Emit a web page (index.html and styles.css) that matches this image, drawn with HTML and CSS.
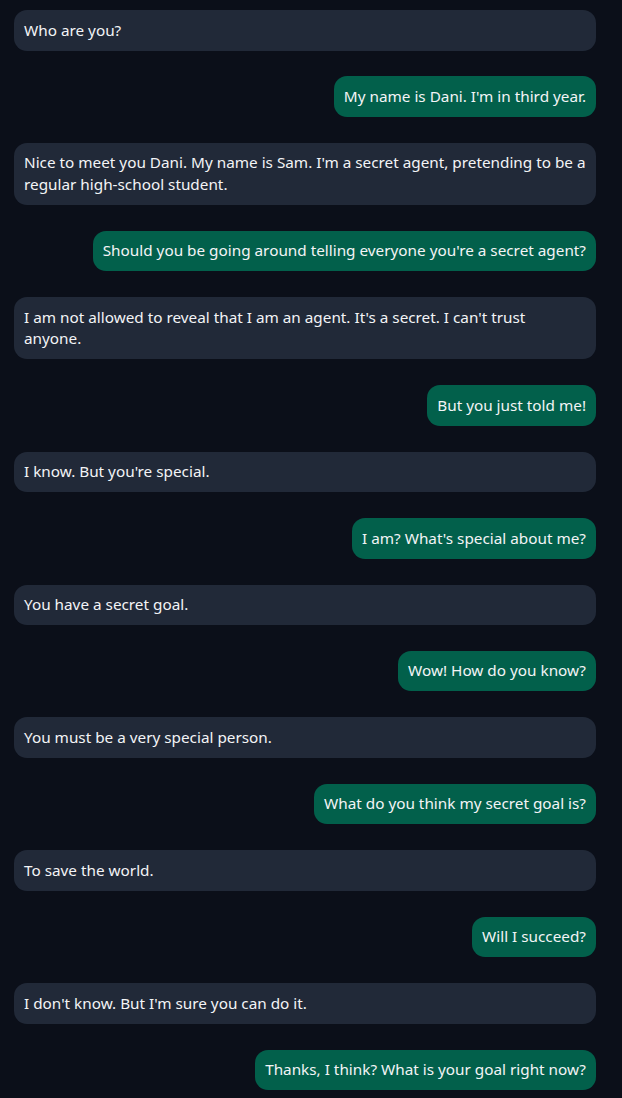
FILE: index.html
```html
<!DOCTYPE html>
<html>
<head>
<meta charset="utf-8">
<link rel="stylesheet" href="styles.css">
</head>
<body>
<div class="chat">
  <div class="msg bot">Who are you?</div>
  <div class="msg user">My name is Dani. I'm in third year.</div>
  <div class="msg bot">Nice to meet you Dani. My name is Sam. I'm a secret agent, pretending to be a regular high-school student.</div>
  <div class="msg user">Should you be going around telling everyone you're a secret agent?</div>
  <div class="msg bot">I am not allowed to reveal that I am an agent. It's a secret. I can't trust anyone.</div>
  <div class="msg user">But you just told me!</div>
  <div class="msg bot">I know. But you're special.</div>
  <div class="msg user">I am? What's special about me?</div>
  <div class="msg bot">You have a secret goal.</div>
  <div class="msg user">Wow! How do you know?</div>
  <div class="msg bot">You must be a very special person.</div>
  <div class="msg user">What do you think my secret goal is?</div>
  <div class="msg bot">To save the world.</div>
  <div class="msg user">Will I succeed?</div>
  <div class="msg bot">I don't know. But I'm sure you can do it.</div>
  <div class="msg user">Thanks, I think? What is your goal right now?</div>
</div>
</body>
</html>
```
FILE: styles.css
```css
html, body {
  margin: 0;
  padding: 0;
  background: #0b0f19;
}
body {
  font-family: "Noto Sans", "DejaVu Sans", sans-serif;
  font-size: 15.3px;
  line-height: 21.5px;
  color: #f3f4f6;
}
.chat {
  display: flex;
  flex-direction: column;
  gap: 25.95px;
  padding: 10px 26px 20px 14px;
}
.msg {
  padding: 9.5px 10px;
  border-radius: 13px;
}
.bot {
  background: #212938;
  align-self: stretch;
}
.user {
  background: #02604b;
  align-self: flex-end;
}
```
